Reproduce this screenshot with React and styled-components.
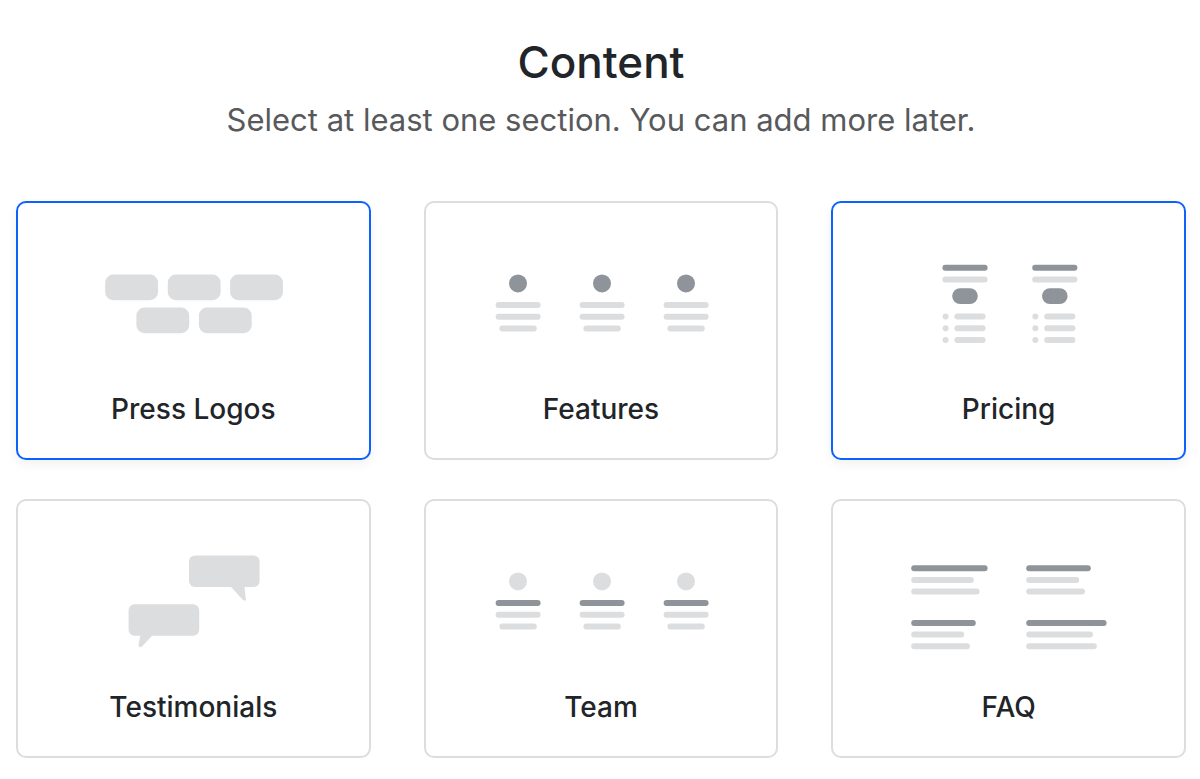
import React, { useState } from "react";
import styled, { createGlobalStyle } from "styled-components";

const LIGHT = "#dcdddf";
const DARK = "#8e9499";

const Line = ({ x, y, width, dark }) => (
  <rect x={x} y={y} width={width} height="6" rx="3" fill={dark ? DARK : LIGHT} />
);

const PressLogosArt = () => (
  <g fill={LIGHT}>
    {[32.2, 94.8, 157.1].map((x) => (
      <rect key={x} x={x} y="25.6" width="52.8" height="25.6" rx="8" />
    ))}
    {[63.4, 125.9].map((x) => (
      <rect key={x} x={x} y="58.6" width="52.8" height="25.6" rx="8" />
    ))}
  </g>
);

const PeopleArt = ({ darkDot }) => (
  <>
    {[0, 84, 168].map((x) => (
      <g key={x} transform={`translate(${x} 0)`}>
        <circle cx="37" cy="34.4" r="9" fill={darkDot ? DARK : LIGHT} />
        <Line x={14.6} y={53} width={45} dark={!darkDot} />
        <Line x={14.6} y={64.7} width={45} />
        <Line x={18.4} y={76.4} width={37.4} />
      </g>
    ))}
  </>
);

const PricingArt = () => (
  <>
    {[0, 89.8].map((x) => (
      <g key={x} transform={`translate(${x} 0)`}>
        <Line x={53.4} y={15.8} width={45.2} dark />
        <Line x={53.4} y={27.6} width={45.2} />
        <rect x="63.2" y="39.2" width="25.6" height="15.8" rx="7.9" fill={DARK} />
        {[64.6, 76.3, 88].map((y) => (
          <g key={y}>
            <circle cx="56.6" cy={y + 3} r="3" fill={LIGHT} />
            <Line x={65.4} y={y} width={31.2} />
          </g>
        ))}
      </g>
    ))}
  </>
);

const TestimonialsArt = () => (
  <g fill={LIGHT}>
    <rect x="116" y="8.4" width="70.6" height="31.6" rx="6" />
    <path d="M157.2 39 L170 53 Q172.6 54.8 172.9 52.6 L171.4 39 Z" />
    <rect x="55.6" y="57.2" width="70.6" height="31.6" rx="6" />
    <path d="M67.4 88 L65.4 98.4 Q66.4 101.4 69 99.4 L79.8 88 Z" />
  </g>
);

const QUESTIONS = [
  { x: 22.2, y: 18.2, lines: [76.4, 62.6, 68.4] },
  { x: 137.2, y: 18.2, lines: [64.6, 53, 58.8] },
  { x: 22.2, y: 72.9, lines: [64.6, 53, 58.8] },
  { x: 137.2, y: 72.9, lines: [80.4, 66.8, 70.6] },
];

const FaqArt = () => (
  <>
    {QUESTIONS.map(({ x, y, lines }) =>
      lines.map((width, i) => (
        <Line key={`${x}-${y}-${i}`} x={x} y={y + i * 11.7} width={width} dark={i === 0} />
      ))
    )}
  </>
);

const SECTIONS = [
  { name: "Press Logos", art: <PressLogosArt /> },
  { name: "Features", art: <PeopleArt darkDot /> },
  { name: "Pricing", art: <PricingArt /> },
  { name: "Testimonials", art: <TestimonialsArt /> },
  { name: "Team", art: <PeopleArt /> },
  { name: "FAQ", art: <FaqArt /> },
];

const App = () => {
  const [selected, setSelected] = useState(["Press Logos", "Pricing"]);

  const toggle = (name) =>
    setSelected((names) =>
      names.includes(name) ? names.filter((n) => n !== name) : [...names, name]
    );

  return (
    <Page>
      <GlobalStyle />
      <Header>
        <Title>Content</Title>
        <Subtitle>Select at least one section. You can add more later.</Subtitle>
      </Header>
      <Grid>
        {SECTIONS.map(({ name, art }) => (
          <Card
            key={name}
            type="button"
            aria-pressed={selected.includes(name)}
            $selected={selected.includes(name)}
            onClick={() => toggle(name)}
          >
            <Art viewBox="0 0 240 110" aria-hidden="true">
              {art}
            </Art>
            <CardName>{name}</CardName>
          </Card>
        ))}
      </Grid>
    </Page>
  );
};

const GlobalStyle = createGlobalStyle`
  * {
    box-sizing: border-box;
  }

  body {
    margin: 0;
    background: #fff;
    color: #212529;
    font-family: Inter, "Liberation Sans", sans-serif;
  }
`;

const Page = styled.main`
  padding: 32px 14px 21px 16px;
`;

const Header = styled.header`
  margin-bottom: 59px;
  text-align: center;
`;

const Title = styled.h1`
  margin: 0;
  font-size: 44px;
  font-weight: 500;
  line-height: 60px;
`;

const Subtitle = styled.p`
  margin: 6px 0 0;
  color: #58595b;
  font-size: 31px;
  line-height: 44px;
`;

const Grid = styled.div`
  display: grid;
  grid-template-columns: repeat(3, 1fr);
  gap: 39px 53px;
`;

const Card = styled.button`
  display: flex;
  flex-direction: column;
  align-items: center;
  padding: 46px 16px 29px;
  border: 2px solid ${({ $selected }) => ($selected ? "#0d62fe" : "#dcdddf")};
  border-radius: 10px;
  background: #fff;
  box-shadow: ${({ $selected }) =>
    $selected ? "0 4px 12px rgba(0, 0, 0, 0.06)" : "none"};
  color: inherit;
  font-family: inherit;
  cursor: pointer;
`;

const Art = styled.svg`
  width: 240px;
  max-width: 100%;
  height: 110px;
`;

const CardName = styled.span`
  margin-top: 30px;
  font-size: 28px;
  font-weight: 500;
  line-height: 40px;
`;

export default App;
